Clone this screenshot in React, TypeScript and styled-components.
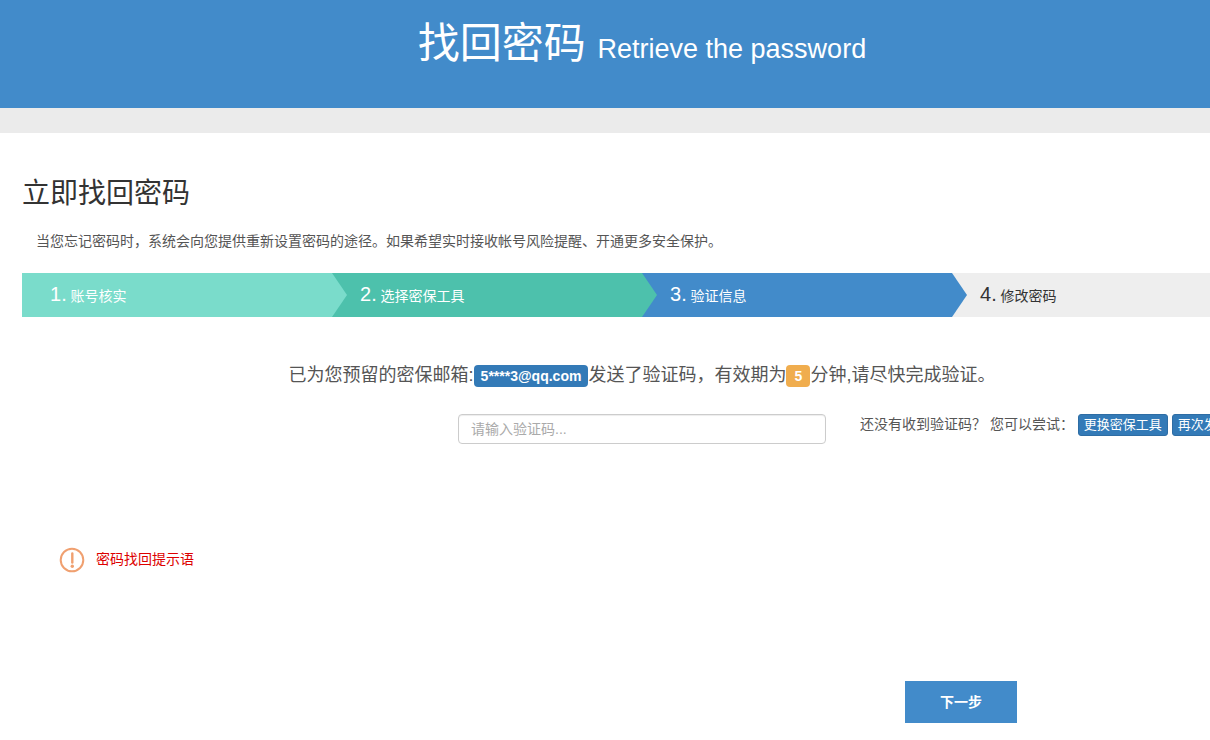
import React, { useState } from "react";
import styled, { createGlobalStyle } from "styled-components";

const GlobalStyle = createGlobalStyle`
  *, *::before, *::after { box-sizing: border-box; }
  html { overflow-x: hidden; }
  body {
    margin: 0;
    background: #fff;
    color: #555;
    font-family: "Liberation Sans", "Noto Sans CJK SC", sans-serif;
    font-size: 14px;
    line-height: 20px;
  }
  button, input { font-family: inherit; }
`;

const Page = styled.div`
  min-width: 1284px;
`;

const Banner = styled.header`
  padding: 20px 0 40px;
  background: #428bca;
  border-bottom: 25px solid #ebebeb;
  color: #fff;
  text-align: center;
`;

const BannerTitle = styled.h1`
  margin: 0;
  font-size: 42px;
  font-weight: 400;
  line-height: 48px;
`;

const BannerSubtitle = styled.small`
  font-size: 27px;
  line-height: 28px;
`;

const Content = styled.main`
  padding: 41px 22px 16px;
`;

const Heading = styled.h2`
  margin: 0;
  color: #333;
  font-size: 28px;
  font-weight: 400;
  line-height: 40px;
`;

const Intro = styled.p`
  margin: 17px 0 22px;
  padding-left: 14px;
`;

const Steps = styled.ol`
  display: flex;
  margin: 0;
  padding: 0;
  list-style: none;
`;

const Step = styled.li<{ $fill: string; $ink: string; $arrow: boolean }>`
  position: relative;
  flex: 1;
  height: 44px;
  padding-left: 28px;
  background: ${(p) => p.$fill};
  color: ${(p) => p.$ink};
  line-height: 42px;

  &::after {
    content: "";
    display: ${(p) => (p.$arrow ? "block" : "none")};
    position: absolute;
    z-index: 1;
    top: 0;
    left: 100%;
    width: 15px;
    height: 100%;
    background: inherit;
    clip-path: polygon(0 0, 100% 50%, 0 100%);
  }
`;

const StepNumber = styled.span`
  font-size: 20px;
`;

const Notice = styled.p`
  margin: 45px 0 0;
  font-size: 18px;
  line-height: 26px;
  text-align: center;
`;

const Tag = styled.span<{ $fill: string }>`
  display: inline-block;
  min-width: 24px;
  padding: 0 7px;
  border-radius: 4px;
  background: ${(p) => p.$fill};
  color: #fff;
  font-size: 14px;
  font-weight: 700;
  line-height: 22px;
`;

const CodeRow = styled.div`
  display: grid;
  grid-template-columns: 436fr 368fr 402fr;
  column-gap: 34px;
  margin-top: 26px;
  margin-left: -34px;
`;

const CodeInput = styled.input`
  grid-column: 2;
  height: 30px;
  padding: 0 12px;
  border: 1px solid #ccc;
  border-radius: 4px;
  background: #fff;
  box-shadow: inset 0 1px 1px rgba(0, 0, 0, 0.075);
  color: #555;
  font-size: 14px;

  &::placeholder { color: #aaa; opacity: 1; }
`;

const Help = styled.div`
  line-height: 20px;
  white-space: nowrap;
`;

const SmallButton = styled.button`
  height: 22px;
  padding: 0 5px;
  border: 1px solid #2e6da4;
  border-radius: 3px;
  background: #337ab7;
  color: #fff;
  font-size: 13px;
  line-height: 20px;
  vertical-align: top;
  cursor: pointer;
`;

const Hint = styled.div`
  display: flex;
  gap: 11px;
  margin: 103px 0 0 37px;
  color: #d00;
  line-height: 24px;
`;

const Actions = styled.div`
  display: flex;
  justify-content: flex-end;
  margin-top: 108px;
  padding-right: 245px;
`;

const NextButton = styled.button`
  width: 112px;
  height: 42px;
  padding: 0 0 2px;
  border: 0;
  background: #428bca;
  color: #fff;
  font-size: 14px;
  font-weight: 700;
  cursor: pointer;
`;

const steps = [
  { label: "账号核实", fill: "#7adccb", ink: "#fff" },
  { label: "选择密保工具", fill: "#4dc1ac", ink: "#fff" },
  { label: "验证信息", fill: "#428bca", ink: "#fff" },
  { label: "修改密码", fill: "#eee", ink: "#333" },
];

function WarningIcon() {
  return (
    <svg width="26" height="26" viewBox="0 0 26 26" fill="none" aria-hidden="true">
      <circle cx="13" cy="13" r="11.3" stroke="#f0a070" strokeWidth="2" />
      <path d="M13.3 6.5v9" stroke="#f0a070" strokeWidth="2.4" strokeLinecap="round" />
      <circle cx="13.3" cy="19.3" r="1.7" fill="#f0a070" />
    </svg>
  );
}

export default function App() {
  const [code, setCode] = useState("");

  return (
    <Page>
      <GlobalStyle />
      <Banner>
        <BannerTitle>
          找回密码 <BannerSubtitle>Retrieve the password</BannerSubtitle>
        </BannerTitle>
      </Banner>
      <Content>
        <Heading>立即找回密码</Heading>
        <Intro>
          当您忘记密码时，系统会向您提供重新设置密码的途径。如果希望实时接收帐号风险提醒、开通更多安全保护。
        </Intro>
        <Steps>
          {steps.map((step, i) => (
            <Step
              key={step.label}
              $fill={step.fill}
              $ink={step.ink}
              $arrow={i < steps.length - 1}
              aria-current={i === 2 ? "step" : undefined}
            >
              <StepNumber>{i + 1}.</StepNumber> {step.label}
            </Step>
          ))}
        </Steps>
        <form onSubmit={(e) => e.preventDefault()}>
          <Notice>
            已为您预留的密保邮箱:<Tag $fill="#337ab7">5****3@qq.com</Tag>
            发送了验证码，有效期为<Tag $fill="#f0ad4e">5</Tag>
            分钟,请尽快完成验证。
          </Notice>
          <CodeRow>
            <CodeInput
              aria-label="验证码"
              placeholder="请输入验证码..."
              value={code}
              onChange={(e) => setCode(e.target.value)}
            />
            <Help>
              还没有收到验证码？ 您可以尝试：{" "}
              <SmallButton type="button">更换密保工具</SmallButton>{" "}
              <SmallButton type="button">再次发送</SmallButton>
            </Help>
          </CodeRow>
          <Hint>
            <WarningIcon />
            <span>密码找回提示语</span>
          </Hint>
          <Actions>
            <NextButton type="submit">下一步</NextButton>
          </Actions>
        </form>
      </Content>
    </Page>
  );
}
